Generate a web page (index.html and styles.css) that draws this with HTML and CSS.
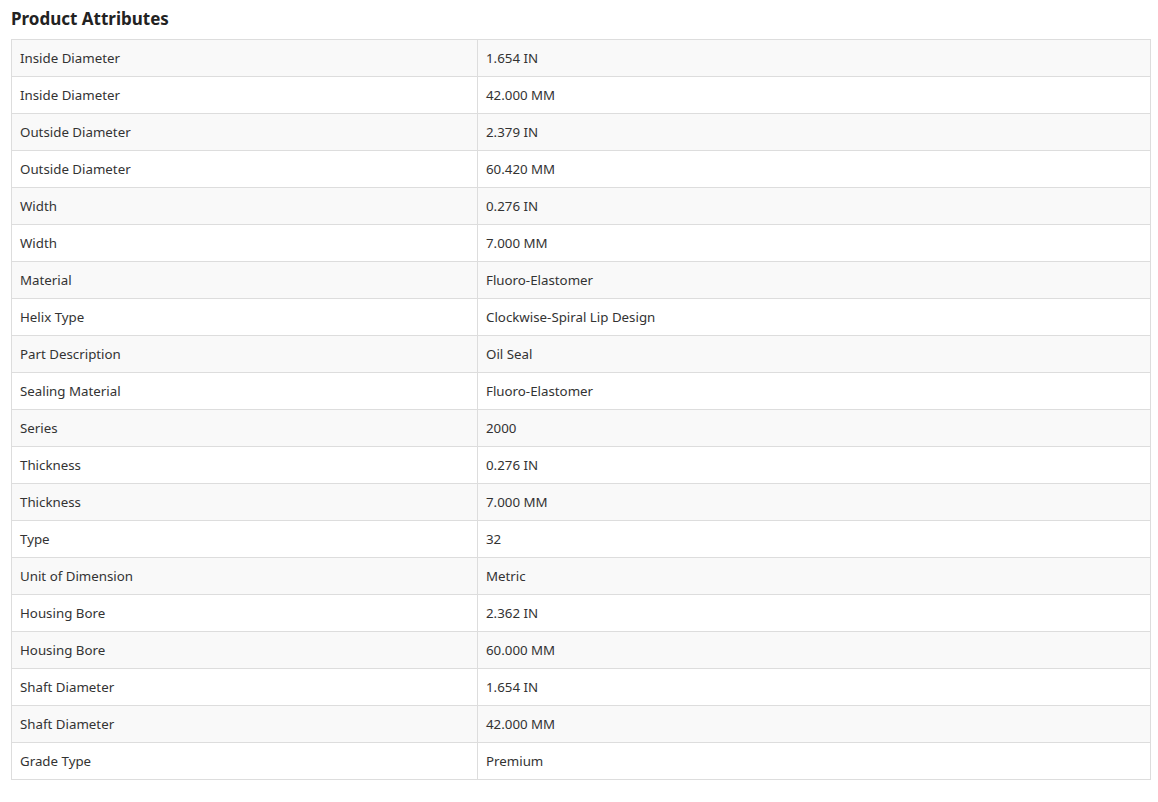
FILE: index.html
```html
<!DOCTYPE html>
<html>
<head>
<meta charset="utf-8">
<link rel="stylesheet" href="styles.css">
</head>
<body>
<div class="attrs">
  <h2 class="attrs-title">Product Attributes</h2>
  <table class="attrs-table">
    <colgroup><col class="col-name"><col class="col-value"></colgroup>
    <tbody>
      <tr><td>Inside Diameter</td><td>1.654 IN</td></tr>
      <tr><td>Inside Diameter</td><td>42.000 MM</td></tr>
      <tr><td>Outside Diameter</td><td>2.379 IN</td></tr>
      <tr><td>Outside Diameter</td><td>60.420 MM</td></tr>
      <tr><td>Width</td><td>0.276 IN</td></tr>
      <tr><td>Width</td><td>7.000 MM</td></tr>
      <tr><td>Material</td><td>Fluoro-Elastomer</td></tr>
      <tr><td>Helix Type</td><td>Clockwise-Spiral Lip Design</td></tr>
      <tr><td>Part Description</td><td>Oil Seal</td></tr>
      <tr><td>Sealing Material</td><td>Fluoro-Elastomer</td></tr>
      <tr><td>Series</td><td>2000</td></tr>
      <tr><td>Thickness</td><td>0.276 IN</td></tr>
      <tr><td>Thickness</td><td>7.000 MM</td></tr>
      <tr><td>Type</td><td>32</td></tr>
      <tr><td>Unit of Dimension</td><td>Metric</td></tr>
      <tr><td>Housing Bore</td><td>2.362 IN</td></tr>
      <tr><td>Housing Bore</td><td>60.000 MM</td></tr>
      <tr><td>Shaft Diameter</td><td>1.654 IN</td></tr>
      <tr><td>Shaft Diameter</td><td>42.000 MM</td></tr>
      <tr><td>Grade Type</td><td>Premium</td></tr>
    </tbody>
  </table>
</div>
</body>
</html>
```

FILE: styles.css
```css
html, body {
  margin: 0;
  padding: 0;
  background: #fff;
}
body {
  font-family: "Noto Sans", "Open Sans", sans-serif;
  color: #333;
}
.attrs {
  padding: 8px 7px 0 11px;
}
.attrs-title {
  margin: 0 0 9px 0;
  font-size: 17px;
  line-height: 22px;
  font-weight: 700;
  color: #222;
}
.attrs-table {
  width: 1140px;
  border-collapse: collapse;
  border: 1px solid #ddd;
  font-size: 13.3px;
}
.col-name { width: 466px; }
.attrs-table td {
  border: 1px solid #ddd;
  padding: 8px;
  line-height: 20px;
  height: 20px;
  color: #333;
}
.attrs-table tr:nth-child(odd) td {
  background: #f9f9f9;
}
```
